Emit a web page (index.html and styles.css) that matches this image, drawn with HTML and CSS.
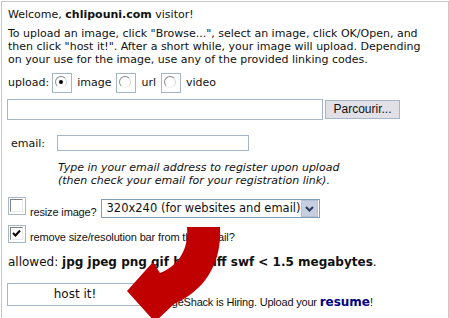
FILE: index.html
```html
<!DOCTYPE html>
<html lang="en">
<head>
    <meta charset="UTF-8">
    <title>Upload</title>
    <link rel="stylesheet" href="styles.css">
</head>
<body>
    <div class="box">
        <p class="welcome">Welcome, <b>chlipouni.com</b> visitor!</p>
        <p class="intro">To upload an image, click "Browse...", select an image, click OK/Open, and<br>then click "host it!". After a short while, your image will upload. Depending<br>on your use for the image, use any of the provided linking codes.</p>

        <!-- upload type -->
        <div class="upload-row">
            <span class="upload-label">upload:</span>
            <span class="radio-box"><span class="radio checked"></span></span>
            <span class="opt">image</span>
            <span class="radio-box"><span class="radio"></span></span>
            <span class="opt">url</span>
            <span class="radio-box"><span class="radio"></span></span>
            <span class="opt">video</span>
        </div>

        <div class="file-row">
            <span class="file-input"></span>
            <span class="browse-btn">Parcourir...</span>
        </div>

        <div class="email-row">
            <span class="email-label">email:</span>
            <span class="email-input"></span>
        </div>
        <p class="note">Type in your email address to register upon upload<br>(then check your email for your registration link).</p>

        <div class="check-row resize-row">
            <span class="check-box"><span class="check"></span></span>
            <span class="check-text">resize image?</span>
            <span class="select">
                <span class="select-text">320x240 (for websites and email)</span>
                <span class="select-arrow">
                    <svg width="9" height="6" viewBox="0 0 9 6"><path d="M1 1 L4.5 4.5 L8 1" fill="none" stroke="#2a3a5a" stroke-width="2"/></svg>
                </span>
            </span>
        </div>
        <div class="check-row">
            <span class="check-box">
                <span class="check">
                    <svg width="11" height="11" viewBox="0 0 11 11"><path d="M2 5 L4.5 7.5 L9 2.5" fill="none" stroke="#000" stroke-width="2"/></svg>
                </span>
            </span>
            <span class="check-text">remove size/resolution bar from thumbnail?</span>
        </div>

        <p class="allowed">allowed: <b>jpg jpeg png gif bmp tiff swf &lt; 1.5 megabytes</b>.</p>

        <div class="submit-row">
            <span class="host-btn">host it!</span>
            <span class="hiring">ImageShack is Hiring. Upload your <a href="#">resume</a>!</span>
        </div>
    </div>

    <!-- red arrow over the form -->
    <svg class="arrow" width="449" height="318" viewBox="0 0 449 318">
        <path d="M187 227 L220 227 C222 262 206 290 174 304 L155 322 L127 291 L153 262 L160 273 C178 266 189 250 187 227 Z" fill="#c00000"/>
    </svg>
</body>
</html>
```

FILE: styles.css
```css
body {
    margin: 0;
    font-family: "DejaVu Sans", Verdana, sans-serif;
    font-size: 11px;
    color: #111;
    background: #fff;
    overflow: hidden;
}
.box {
    margin: 1px 0 0 1px;
    width: 440px;
    height: 330px;
    border: 1px solid #c8c8c8;
    border-bottom: none;
    padding: 5px 0 0 6px;
    line-height: 13px;
}
p {
    margin: 0;
}
.welcome {
    margin-top: 1px;
}
.intro {
    margin-top: 6px;
    white-space: nowrap;
}
.upload-row {
    display: flex;
    align-items: center;
    margin-top: 6px;
    height: 21px;
}
.upload-label {
    margin-right: 3px;
}
.radio-box {
    width: 18px;
    height: 18px;
    border: 1px solid #a4b6c8;
    display: flex;
    align-items: center;
    justify-content: center;
    margin-right: 5px;
}
.opt {
    margin-right: 5px;
}
.radio {
    width: 10px;
    height: 10px;
    border-radius: 50%;
    border: 1px solid;
    border-color: #808080 #d8d8d8 #f0f0f0 #909090;
    position: relative;
    margin: -2px 0 0 -2px;
}
.radio.checked::after {
    content: "";
    position: absolute;
    left: 3px;
    top: 3px;
    width: 4px;
    height: 4px;
    border-radius: 50%;
    background: #000;
}
.file-row {
    display: flex;
    margin: 6px 0 0 -1px;
}
.file-input {
    width: 314px;
    height: 19px;
    border: 1px solid #a4b6c8;
}
.browse-btn {
    margin: 1px 0 0 2px;
    width: 73px;
    height: 17px;
    border: 1px solid #a4b6c8;
    background: #e0e0e6;
    font-family: "Liberation Sans", Arial, sans-serif;
    font-size: 12px;
    line-height: 17px;
    text-align: center;
}
.email-row {
    display: flex;
    align-items: center;
    margin-top: 15px;
}
.email-label {
    margin-left: 3px;
    width: 46px;
}
.email-input {
    width: 190px;
    height: 14px;
    border: 1px solid #a4b6c8;
}
.note {
    margin: 10px 0 0 50px;
    font-style: italic;
}
.check-row {
    display: flex;
    align-items: flex-end;
}
.resize-row {
    margin-top: 10px;
}
.check-box {
    width: 16px;
    height: 16px;
    border: 1px solid #a4b6c8;
    display: flex;
    align-items: center;
    justify-content: center;
    align-self: flex-start;
}
.check {
    width: 11px;
    height: 11px;
    border: 1px solid;
    border-color: #808080 #e8e8e8 #e8e8e8 #808080;
    display: flex;
    align-items: center;
    justify-content: center;
    margin: -2px 0 0 -2px;
}
.check-text {
    font-family: "Liberation Sans", Arial, sans-serif;
    font-size: 11px;
    letter-spacing: -0.15px;
    margin-left: 4px;
    line-height: 14px;
    margin-bottom: -1px;
}
.select {
    display: flex;
    align-items: center;
    margin-left: 4px;
    width: 217px;
    height: 17px;
    border: 1px solid #7f9db9;
    align-self: flex-start;
    margin-top: 2px;
}
.select-text {
    flex: 1;
    padding-left: 5px;
    font-size: 11.5px;
    white-space: nowrap;
}
.select-arrow {
    width: 15px;
    height: 15px;
    margin-right: 1px;
    background: #c6cfe0;
    border: 1px solid #b4c0d4;
    display: flex;
    align-items: center;
    justify-content: center;
}
.check-row + .check-row {
    margin-top: 7px;
}
.allowed {
    margin-top: 13px;
    font-size: 12px;
}
.submit-row {
    display: flex;
    align-items: flex-end;
    margin: 14px 0 0 -1px;
}
.host-btn {
    width: 134px;
    height: 21px;
    border: 1px solid #a4b6c8;
    text-align: center;
    font-size: 12px;
    line-height: 21px;
}
.hiring {
    margin-left: 11px;
    font-family: "Liberation Sans", Arial, sans-serif;
    font-size: 11px;
    letter-spacing: -0.2px;
    margin-bottom: -3px;
}
.hiring a {
    font-family: "DejaVu Sans", Verdana, sans-serif;
    font-size: 12px;
    letter-spacing: 0;
    font-weight: bold;
    color: #000080;
    text-decoration: none;
}
.arrow {
    position: absolute;
    left: 0;
    top: 0;
}
```
